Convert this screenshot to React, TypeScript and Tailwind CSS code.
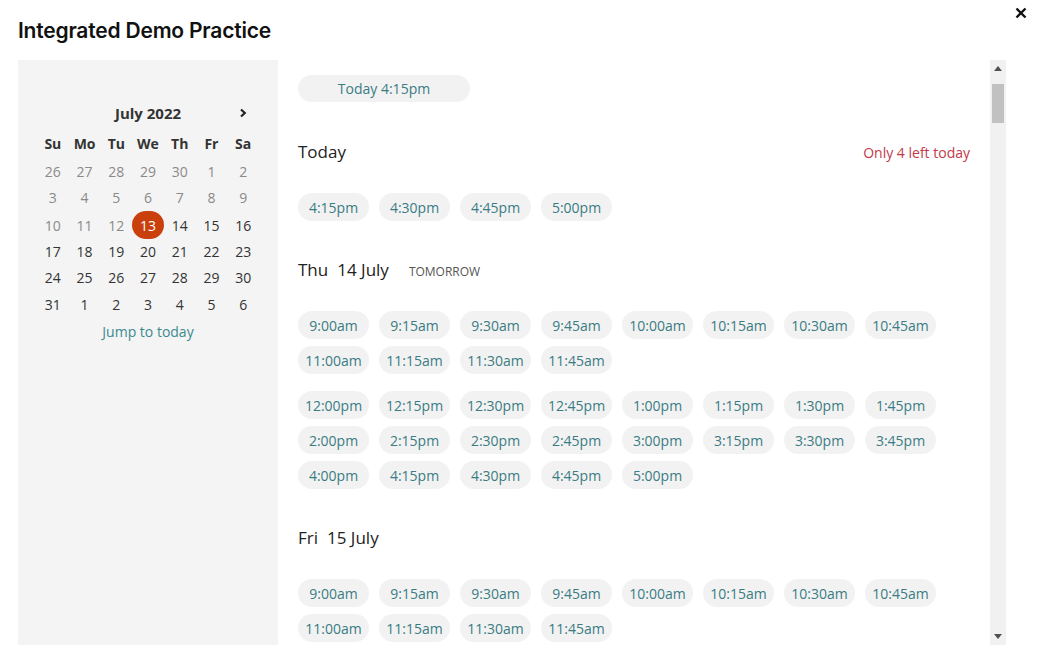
import React from 'react';

const font = { fontFamily: '"Open Sans", "Noto Sans", sans-serif' };

const morning = ['9:00am', '9:15am', '9:30am', '9:45am', '10:00am', '10:15am', '10:30am', '10:45am', '11:00am', '11:15am', '11:30am', '11:45am'];
const afternoon = [
  '12:00pm', '12:15pm', '12:30pm', '12:45pm', '1:00pm', '1:15pm', '1:30pm', '1:45pm',
  '2:00pm', '2:15pm', '2:30pm', '2:45pm', '3:00pm', '3:15pm', '3:30pm', '3:45pm',
  '4:00pm', '4:15pm', '4:30pm', '4:45pm', '5:00pm',
];

// calendar cells: [day, tone] tone: 'muted' | 'past' | 'normal' | 'today'
const weeks: [number, string][][] = [
  [[26, 'muted'], [27, 'muted'], [28, 'muted'], [29, 'muted'], [30, 'muted'], [1, 'past'], [2, 'past']],
  [[3, 'past'], [4, 'past'], [5, 'past'], [6, 'past'], [7, 'past'], [8, 'past'], [9, 'past']],
  [[10, 'past'], [11, 'past'], [12, 'past'], [13, 'today'], [14, 'normal'], [15, 'normal'], [16, 'normal']],
  [[17, 'normal'], [18, 'normal'], [19, 'normal'], [20, 'normal'], [21, 'normal'], [22, 'normal'], [23, 'normal']],
  [[24, 'normal'], [25, 'normal'], [26, 'normal'], [27, 'normal'], [28, 'normal'], [29, 'normal'], [30, 'normal']],
  [[31, 'normal'], [1, 'normal'], [2, 'normal'], [3, 'normal'], [4, 'normal'], [5, 'normal'], [6, 'normal']],
];

function Slot({ label }: { label: string }) {
  return (
    <button className="w-[71px] h-[28px] rounded-full bg-[#f2f2f2] text-[14px] text-[#3a7c83] flex items-center justify-center">
      {label}
    </button>
  );
}

function SlotGroup({ slots }: { slots: string[] }) {
  return (
    <div className="flex flex-wrap gap-x-[10px] gap-y-[7px] w-[650px]">
      {slots.map((s) => (
        <Slot key={s} label={s} />
      ))}
    </div>
  );
}

function DayHeading({ children, right, top = 'mt-[38px]' }: { children: React.ReactNode; right?: React.ReactNode; top?: string }) {
  return (
    <div className={`flex items-center justify-between h-6 mb-[29px] ${top}`}>
      <div className="flex items-baseline text-[17px] text-[#222]">{children}</div>
      {right}
    </div>
  );
}

function Calendar() {
  return (
    <div className="w-[260px] shrink-0 bg-[#f4f4f4] px-[19px] pt-[41px]">
      <div className="grid grid-cols-7 h-6 items-center">
        <div className="col-start-2 col-span-5 text-center text-[15px] font-bold text-[#333]">July 2022</div>
        <div className="col-start-7 flex justify-center">
          <svg width="10" height="10" viewBox="0 0 10 10">
            <path d="M3 1.5 L6.8 5 L3 8.5" fill="none" stroke="#222" strokeWidth="2.2" />
          </svg>
        </div>
      </div>
      <div className="grid grid-cols-7 h-[30px] mt-[3px] items-center text-[14px] font-bold text-[#333]">
        {['Su', 'Mo', 'Tu', 'We', 'Th', 'Fr', 'Sa'].map((d) => (
          <div key={d} className="text-center">{d}</div>
        ))}
      </div>
      {weeks.map((w, i) => (
        <div key={i} className="grid grid-cols-7 h-[26.6px] items-center text-[14px]">
          {w.map(([d, tone], j) => (
            <div key={j} className="flex justify-center">
              {tone === 'today' ? (
                <span className="w-[33px] h-[28px] rounded-full bg-[#c9400c] text-white flex items-center justify-center">{d}</span>
              ) : (
                <span className={tone === 'normal' ? 'text-[#333]' : 'text-[#8a8a8a]'}>{d}</span>
              )}
            </div>
          ))}
        </div>
      ))}
      <div className="h-[27px] flex items-center justify-center text-[14px] text-[#3a8a90]">Jump to today</div>
    </div>
  );
}

function Scrollbar() {
  return (
    <div className="w-4 shrink-0 bg-[#f1f1f1] flex flex-col items-center">
      <div className="h-[17px] flex items-center justify-center">
        <svg width="8" height="5" viewBox="0 0 8 5"><path d="M0 5 L4 0 L8 5 Z" fill="#505050" /></svg>
      </div>
      <div className="w-3 h-[39px] mt-[7px] bg-[#c1c1c1]" />
      <div className="flex-1" />
      <div className="h-[17px] flex items-center justify-center">
        <svg width="8" height="5" viewBox="0 0 8 5"><path d="M0 0 L8 0 L4 5 Z" fill="#505050" /></svg>
      </div>
    </div>
  );
}

export default function App() {
  return (
    <div className="w-[1043px] h-[667px] bg-white relative overflow-hidden" style={font}>
      <button className="absolute right-[16px] top-[7px] w-3 h-3 flex items-center justify-center">
        <svg width="12" height="12" viewBox="0 0 12 12">
          <path d="M1.5 1.5 L10.5 10.5 M10.5 1.5 L1.5 10.5" stroke="#111" strokeWidth="2.4" />
        </svg>
      </button>
      <div className="h-[60px] flex items-center px-[18px]">
        <h1 className="pt-[2px] text-[21px] font-semibold text-[#111] tracking-[-0.2px]" style={{ fontFamily: 'Inter, "Liberation Sans", sans-serif' }}>
          Integrated Demo Practice
        </h1>
      </div>
      <div className="flex h-[585px] ml-[18px] w-[988px]">
        <Calendar />
        <div className="flex-1 overflow-hidden pl-5 pr-5 pt-[15px]">
          <button className="w-[172px] h-[27px] rounded-full bg-[#f2f2f2] text-[14px] text-[#3a7c83]">Today 4:15pm</button>

          <DayHeading right={<span className="text-[14px] text-[#c2394a]">Only 4 left today</span>}>
            <span>Today</span>
          </DayHeading>
          <SlotGroup slots={['4:15pm', '4:30pm', '4:45pm', '5:00pm']} />

          <DayHeading top="mt-[37px]">
            <span>Thu</span>
            <span className="ml-[9px]">14 July</span>
            <span className="ml-[20px] text-[12px] text-[#555] uppercase">Tomorrow</span>
          </DayHeading>
          <div className="flex flex-col gap-[17px]">
            <SlotGroup slots={morning} />
            <SlotGroup slots={afternoon} />
          </div>

          <DayHeading top="mt-[37px]">
            <span>Fri</span>
            <span className="ml-[9px]">15 July</span>
          </DayHeading>
          <SlotGroup slots={morning} />
        </div>
        <Scrollbar />
      </div>
    </div>
  );
}
